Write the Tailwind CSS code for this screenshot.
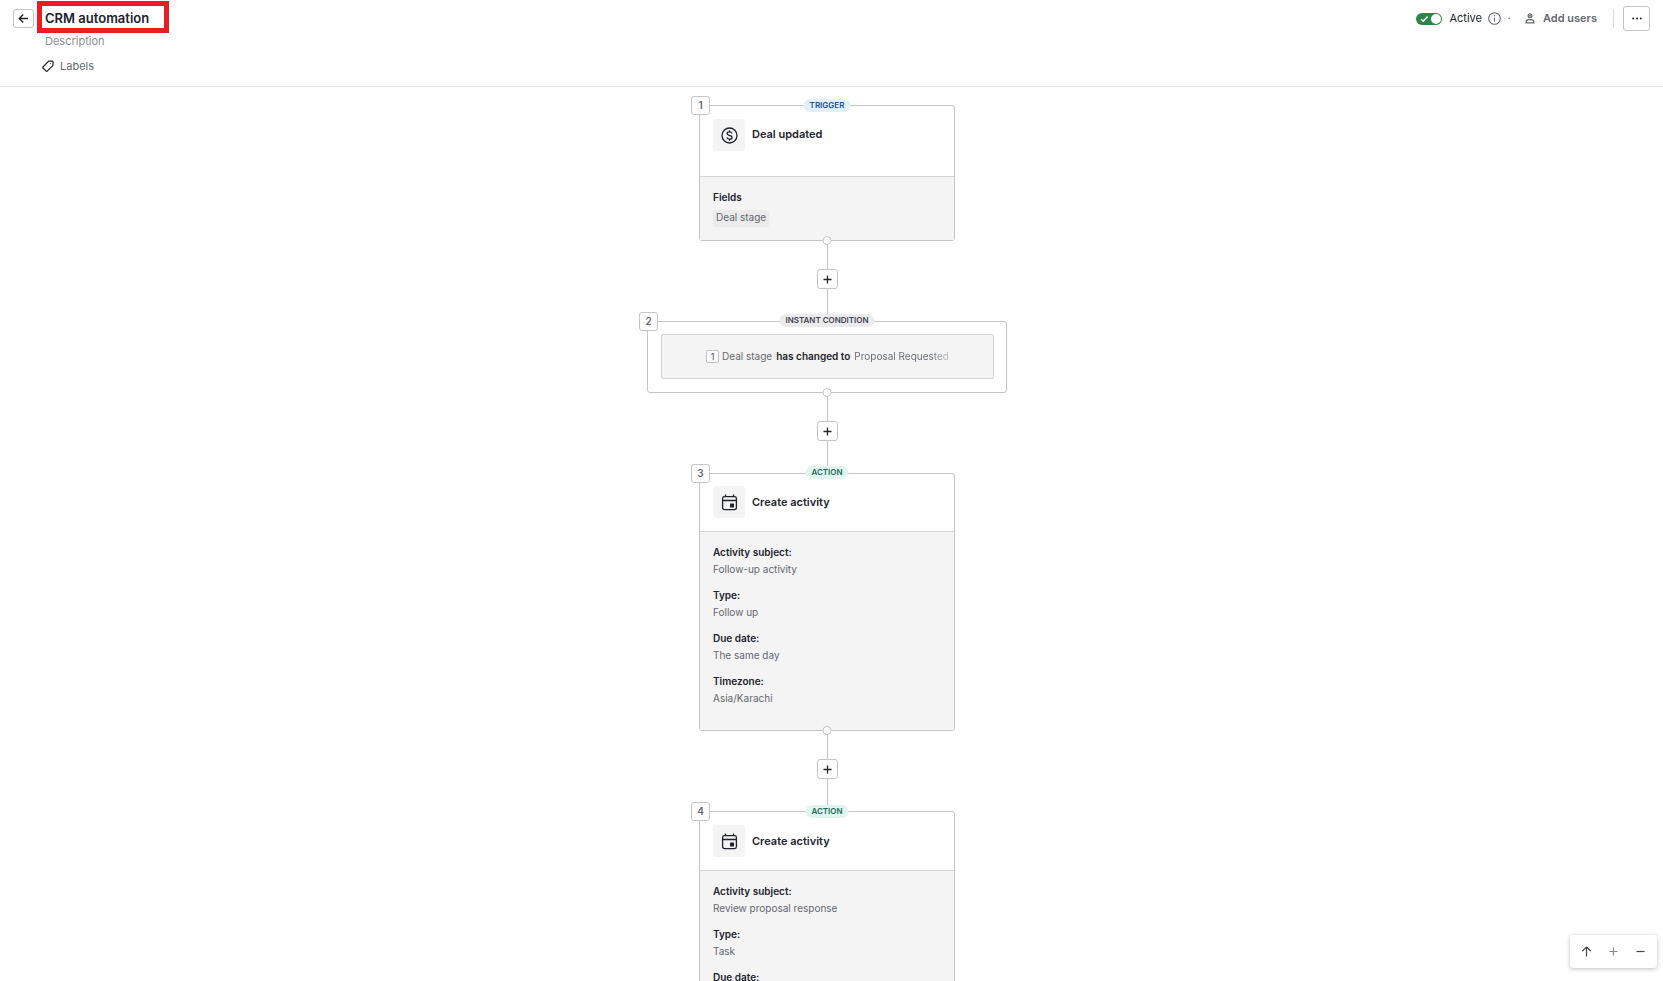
<!DOCTYPE html>
<html lang="en">
<head>
    <meta charset="UTF-8">
    <meta name="viewport" content="width=device-width, initial-scale=1.0">
    <title>CRM automation</title>
    <script src="https://cdn.jsdelivr.net/npm/@tailwindcss/browser@4"></script>
</head>
<body class="h-screen overflow-hidden flex flex-col bg-white text-[#21232c] font-['Inter',sans-serif]">

    <!-- Header -->
    <header class="flex shrink-0 items-start justify-between h-[87px] border-b border-[#e6e6e7]">
        <div class="flex items-start pl-[13px] pt-px">
            <button type="button" aria-label="Back" class="mt-2 flex h-[19px] w-[21px] items-center justify-center rounded-[3px] border border-[#c4c5c8] bg-white">
                <svg class="size-[11px]" viewBox="0 0 11 11" fill="none" stroke="#21232c" stroke-width="1.3"><path d="M10 5.5H1.5M5.2 1.5l-4 4 4 4"/></svg>
            </button>
            <div class="ml-[3px] flex flex-col">
                <input type="text" aria-label="Automation name" value="CRM automation" class="h-8 w-[132px] border-5 border-[#ed1c24] pt-[2px] pl-[3px] text-[13px] font-semibold outline-none">
                <input type="text" aria-label="Description" placeholder="Description" class="ml-2 h-4 w-[120px] text-[11px] placeholder:text-[#8b8d93] outline-none">
                <button type="button" class="ml-[5px] mt-[9px] flex h-4 items-center gap-[6px] text-[11px] text-[#65686f]">
                    <svg class="size-3" viewBox="0 0 12 12" fill="none" stroke="#21232c" stroke-width="1.2" stroke-linejoin="round"><path d="M6.6 1.2L10.2 1l1 1-.4 3.6-5.6 5.6c-.3.3-.7.3-1 0L1 8c-.3-.3-.3-.7 0-1z"/><circle cx="8.7" cy="3.5" r=".5" fill="#21232c" stroke="none"/></svg>
                    Labels
                </button>
            </div>
        </div>

        <div class="flex items-center pr-[13px] pt-[6px]">
            <label class="flex items-center gap-[7px] text-[11px]">
                <input type="checkbox" checked class="peer sr-only">
                <span class="flex h-3 w-[26px] items-center justify-between rounded-full bg-[#2b8547] pl-1 pr-px">
                    <svg class="h-2 w-[9px]" viewBox="0 0 9 8" fill="none" stroke="#fff" stroke-width="1.5"><path d="M1.2 4.2l2 2L7.6 1.6"/></svg>
                    <span class="size-[10px] rounded-full bg-white"></span>
                </span>
                Active
            </label>
            <svg class="ml-[6px] size-[13px]" viewBox="0 0 13 13" fill="none" stroke="#65686f" stroke-width="1.1"><circle cx="6.5" cy="6.5" r="5.8"/><path d="M6.5 5.6v4"/><circle cx="6.5" cy="3.8" r=".8" fill="#65686f" stroke="none"/></svg>
            <span class="ml-[6px] w-[4px] text-center text-[11px] text-[#65686f]">·</span>
            <button type="button" class="ml-[14px] flex items-center gap-[8px] text-[11px] font-semibold text-[#65686f]">
                <svg class="h-[11px] w-[10px]" viewBox="0 0 10 11" fill="none" stroke="#65686f" stroke-width="1.2"><circle cx="5" cy="2.7" r="1.9"/><circle cx="5" cy="2.7" r=".4"/><path d="M3.2 6.6h3.6C8.200 7 9 8 9 9.900H1C1 8 1.800 7 3.200 6.600z"/></svg>
                Add users
            </button>
            <span class="ml-4 h-[19px] w-px bg-[#dcdcde]"></span>
            <button type="button" aria-label="More" class="ml-[9px] flex h-[25px] w-[27px] items-center justify-center rounded-[3px] border border-[#c4c5c8] bg-white">
                <svg class="h-[3px] w-[10px]" viewBox="0 0 10 3" fill="#21232c"><circle cx="1.2" cy="1.500" r="1"/><circle cx="5" cy="1.500" r="1"/><circle cx="8.800" cy="1.500" r="1"/></svg>
            </button>
        </div>
    </header>

    <!-- Workflow -->
    <main class="flex min-h-0 flex-1 flex-col items-center overflow-hidden pt-[18px] pr-[9px] text-[10px]">

        <!-- Step 1 -->
        <section class="relative w-64 shrink-0 rounded-[3px] border border-[#c4c5c8] bg-white">
            <span class="absolute -left-[9px] -top-[10px] flex size-[19px] items-center justify-center rounded-[3px] border border-[#c4c5c8] bg-white font-semibold text-[#65686f]">1</span>
            <span class="absolute left-1/2 -top-[7px] h-[13px] -translate-x-1/2 rounded-full bg-[#e1f1fc] px-[6px] text-[8px] leading-[13px] font-semibold text-[#24508f]">TRIGGER</span>
            <div class="flex h-[71px] items-start gap-[7px] border-b border-[#d3d4d6] p-[13px]">
                <span class="flex size-8 items-center justify-center rounded-[3px] bg-[#f4f4f4]">
                    <svg class="size-[17px]" viewBox="0 0 17 17" fill="none" stroke="#21232c" stroke-width="1.300"><circle cx="8.500" cy="8.500" r="7.500"/><path d="M11 6.400C10.700 5.300 9.800 4.900 8.500 4.900c-1.400 0-2.400.6-2.400 1.700 0 2.600 5 1.200 5 3.800 0 1.100-1 1.700-2.500 1.700-1.500 0-2.400-.6-2.700-1.700M8.500 3.300v1.600M8.500 12.100v1.600"/></svg>
                </span>
                <h2 class="text-[11px] leading-[31px] font-semibold">Deal updated</h2>
            </div>
            <div class="bg-[#f4f4f4] px-[13px] pt-3 pb-[13px]">
                <p class="mb-1 leading-[17px] font-semibold">Fields</p>
                <span class="block h-[17px] w-fit rounded-[3px] bg-[#ebebec] px-[3px] leading-[15px] text-[#65686f]">Deal stage</span>
            </div>
            <span class="absolute left-1/2 -bottom-[5px] z-10 size-[9px] -translate-x-1/2 rounded-full border border-[#c4c5c8] bg-white"></span>
        </section>

        <div class="flex h-20 shrink-0 flex-col items-center">
            <span class="h-7 w-px bg-[#c4c5c8]"></span>
            <button type="button" aria-label="Add step" class="flex h-5 w-[21px] items-center justify-center rounded-[3px] border border-[#c4c5c8] bg-white">
                <svg class="size-[9px]" viewBox="0 0 9 9" stroke="#21232c" stroke-width="1.300"><path d="M4.500 .5v8M.5 4.500h8"/></svg>
            </button>
            <span class="h-8 w-px bg-[#c4c5c8]"></span>
        </div>

        <!-- Step 2 -->
        <section class="relative w-[360px] shrink-0 rounded-[3px] border border-[#c4c5c8] bg-white pt-3 pr-3 pb-[13px] pl-[13px]">
            <span class="absolute -left-[9px] -top-[10px] flex size-[19px] items-center justify-center rounded-[3px] border border-[#c4c5c8] bg-white font-semibold text-[#65686f]">2</span>
            <span class="absolute left-1/2 -top-[8px] h-[13px] -translate-x-1/2 whitespace-nowrap rounded-full bg-[#ebebec] px-[6px] text-[8px] leading-[13px] font-semibold text-[#43454d]">INSTANT CONDITION</span>
            <div class="flex h-[45px] items-center justify-center rounded-[2px] border border-[#d3d4d6] bg-[#f4f4f4] text-[#65686f]">
                <span class="mr-[3px] flex size-[13px] items-center justify-center rounded-[2px] border border-[#c4c5c8] bg-white text-[9px] font-medium">1</span>
                <span>Deal stage</span>
                <strong class="mx-1 font-semibold text-[#21232c]">has changed to</strong>
                <span class="bg-linear-to-r from-[#65686f] from-80% to-[#c4c5c8] bg-clip-text text-transparent">Proposal Requested</span>
            </div>
            <span class="absolute left-1/2 -bottom-[5px] z-10 size-[9px] -translate-x-1/2 rounded-full border border-[#c4c5c8] bg-white"></span>
        </section>

        <div class="flex h-20 shrink-0 flex-col items-center">
            <span class="h-7 w-px bg-[#c4c5c8]"></span>
            <button type="button" aria-label="Add step" class="flex h-5 w-[21px] items-center justify-center rounded-[3px] border border-[#c4c5c8] bg-white">
                <svg class="size-[9px]" viewBox="0 0 9 9" stroke="#21232c" stroke-width="1.300"><path d="M4.500 .5v8M.5 4.500h8"/></svg>
            </button>
            <span class="h-8 w-px bg-[#c4c5c8]"></span>
        </div>

        <!-- Step 3 -->
        <section class="relative w-64 shrink-0 rounded-[3px] border border-[#c4c5c8] bg-white">
            <span class="absolute -left-[9px] -top-[10px] flex size-[19px] items-center justify-center rounded-[3px] border border-[#c4c5c8] bg-white font-semibold text-[#65686f]">3</span>
            <span class="absolute left-1/2 -top-[8px] h-[13px] -translate-x-1/2 rounded-full bg-[#dff5ed] px-[6px] text-[8px] leading-[13px] font-semibold text-[#256b5c]">ACTION</span>
            <div class="flex h-[58px] items-start gap-[7px] border-b border-[#d3d4d6] px-[13px] pt-3">
                <span class="flex size-8 items-center justify-center rounded-[3px] bg-[#f4f4f4]">
                    <svg class="size-[17px]" viewBox="0 0 17 17" fill="none" stroke="#21232c" stroke-width="1.300"><rect x="1.600" y="2.600" width="13.800" height="13" rx="1.800"/><path d="M1.600 6.500h13.800M4.500 .6v2M12.500 .6v2"/><rect x="9" y="9.500" width="4" height="4" rx=".5" fill="#21232c" stroke="none"/></svg>
                </span>
                <h2 class="text-[11px] leading-[32px] font-semibold">Create activity</h2>
            </div>
            <dl class="bg-[#f4f4f4] px-[13px] pt-3 pb-[14px] leading-[17px]">
                <dt class="font-semibold">Activity subject:</dt>
                <dd class="mb-[9px] text-[#65686f]">Follow-up activity</dd>
                <dt class="font-semibold">Type:</dt>
                <dd class="mb-[9px] text-[#65686f]">Follow up</dd>
                <dt class="font-semibold">Due date:</dt>
                <dd class="mb-[9px] text-[#65686f]">The same day</dd>
                <dt class="font-semibold">Timezone:</dt>
                <dd class="mb-[9px] text-[#65686f]">Asia/Karachi</dd>
            </dl>
            <span class="absolute left-1/2 -bottom-[5px] z-10 size-[9px] -translate-x-1/2 rounded-full border border-[#c4c5c8] bg-white"></span>
        </section>

        <div class="flex h-20 shrink-0 flex-col items-center">
            <span class="h-7 w-px bg-[#c4c5c8]"></span>
            <button type="button" aria-label="Add step" class="flex h-5 w-[21px] items-center justify-center rounded-[3px] border border-[#c4c5c8] bg-white">
                <svg class="size-[9px]" viewBox="0 0 9 9" stroke="#21232c" stroke-width="1.300"><path d="M4.500 .5v8M.5 4.500h8"/></svg>
            </button>
            <span class="h-8 w-px bg-[#c4c5c8]"></span>
        </div>

        <!-- Step 4 -->
        <section class="relative w-64 shrink-0 rounded-[3px] border border-[#c4c5c8] bg-white">
            <span class="absolute -left-[9px] -top-[10px] flex size-[19px] items-center justify-center rounded-[3px] border border-[#c4c5c8] bg-white font-semibold text-[#65686f]">4</span>
            <span class="absolute left-1/2 -top-[7px] h-[13px] -translate-x-1/2 rounded-full bg-[#dff5ed] px-[6px] text-[8px] leading-[13px] font-semibold text-[#256b5c]">ACTION</span>
            <div class="flex h-[59px] items-start gap-[7px] border-b border-[#d3d4d6] p-[13px]">
                <span class="flex size-8 items-center justify-center rounded-[3px] bg-[#f4f4f4]">
                    <svg class="size-[17px]" viewBox="0 0 17 17" fill="none" stroke="#21232c" stroke-width="1.300"><rect x="1.600" y="2.600" width="13.800" height="13" rx="1.800"/><path d="M1.600 6.500h13.800M4.500 .6v2M12.500 .6v2"/><rect x="9" y="9.500" width="4" height="4" rx=".5" fill="#21232c" stroke="none"/></svg>
                </span>
                <h2 class="text-[11px] leading-[32px] font-semibold">Create activity</h2>
            </div>
            <dl class="bg-[#f4f4f4] px-[13px] pt-3 pb-[14px] leading-[17px]">
                <dt class="font-semibold">Activity subject:</dt>
                <dd class="mb-[9px] text-[#65686f]">Review proposal response</dd>
                <dt class="font-semibold">Type:</dt>
                <dd class="mb-[9px] text-[#65686f]">Task</dd>
                <dt class="font-semibold">Due date:</dt>
                <dd class="mb-[9px] text-[#65686f]">The same day</dd>
            </dl>
        </section>
    </main>

    <!-- Zoom controls -->
    <div class="fixed right-[6px] bottom-[13px] flex h-[33px] w-[87px] items-center justify-around rounded-[3px] bg-white px-[3px] shadow-[0_1px_4px_rgba(33,35,44,0.3)]">
        <button type="button" aria-label="Back to top" class="flex size-5 items-center justify-center">
            <svg class="size-[11px]" viewBox="0 0 11 11" fill="none" stroke="#43454d" stroke-width="1.200"><path d="M5.500 10.500V1.200M1.300 5l4.200-4 4.200 4"/></svg>
        </button>
        <button type="button" aria-label="Zoom in" class="flex size-5 items-center justify-center">
            <svg class="size-[9px]" viewBox="0 0 9 9" stroke="#8b8d93" stroke-width="1.200"><path d="M4.500 .5v8M.5 4.500h8"/></svg>
        </button>
        <button type="button" aria-label="Zoom out" class="flex size-5 items-center justify-center">
            <svg class="size-[9px]" viewBox="0 0 9 9" stroke="#43454d" stroke-width="1.200"><path d="M.5 4.500h8"/></svg>
        </button>
    </div>
</body>
</html>
